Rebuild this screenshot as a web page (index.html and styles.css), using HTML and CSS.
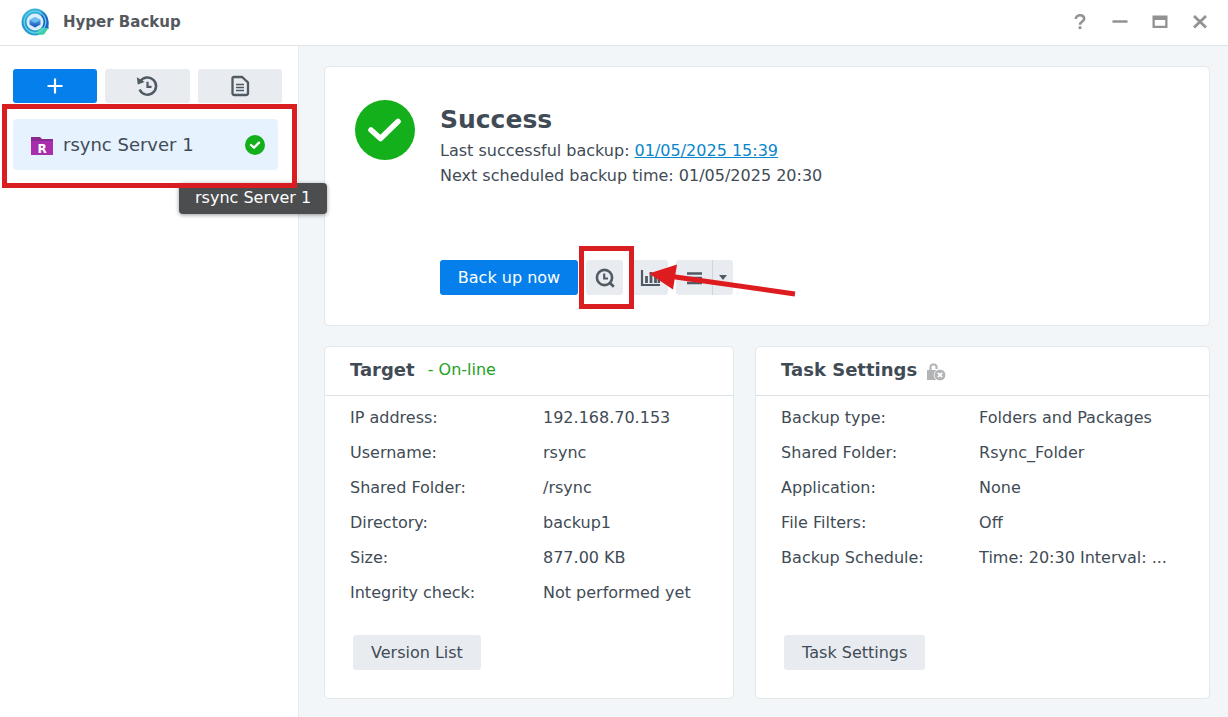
FILE: index.html
```html
<!DOCTYPE html>
<html lang="en">
<head>
<meta charset="utf-8">
<title>Hyper Backup</title>
<link rel="stylesheet" href="styles.css">
</head>
<body>
<div class="app">
  <header class="titlebar">
    <svg class="logo" viewBox="0 0 28 28" aria-hidden="true">
      <defs>
        <linearGradient id="ring" x1="0" y1="0" x2="0.3" y2="1"><stop offset="0" stop-color="#3fbfe0"/><stop offset="0.6" stop-color="#2596d0"/><stop offset="1" stop-color="#2aa0cc"/></linearGradient>
        <linearGradient id="cube" x1="0" y1="0" x2="0" y2="1"><stop offset="0" stop-color="#5bb8f5"/><stop offset="1" stop-color="#1551bd"/></linearGradient>
      </defs>
      <circle cx="14" cy="14" r="13.500" fill="url(#ring)"/>
      <path d="M20 3.500a13.500 13.500 0 0 1 7.500 10.500v7H22z" fill="#1d5fc4"/>
      <path d="M17 20h10.500l-4.500 6.500-6 .5z" fill="#3ccfa6"/>
      <circle cx="14" cy="14" r="10.800" fill="none" stroke="#62d3e4" stroke-width="1.200"/>
      <circle cx="14" cy="14" r="8.500" fill="#dcedfb"/>
      <path d="M14 9l5.500 3v4.500L14 19.500l-5.500-3V12z" fill="url(#cube)"/>
      <path d="M14 9l5.500 3L14 15l-5.500-3z" fill="#6dbdf3"/>
    </svg>
    <h1 class="app-name">Hyper Backup</h1>
    <div class="window-controls">
      <button class="win-btn" type="button" aria-label="Help"><svg viewBox="0 0 16 16"><path d="M3.800 5C3.800 0 12.200 0 12.200 4.800c0 2.800-4.200 2.700-4.200 6" fill="none" stroke="currentColor" stroke-width="2.600"/><rect x="6.600" y="12.300" width="2.800" height="2.800" fill="currentColor"/></svg></button>
      <button class="win-btn" type="button" aria-label="Minimize"><svg viewBox="0 0 16 16"><path d="M1.500 7.500h13" stroke="currentColor" stroke-width="2.400" stroke-linecap="round"/></svg></button>
      <button class="win-btn" type="button" aria-label="Maximize"><svg viewBox="0 0 16 16"><path fill-rule="evenodd" d="M.5 1.500h15V14H.5zM2.800 6v5.800h10.400V6z" fill="currentColor"/></svg></button>
      <button class="win-btn" type="button" aria-label="Close"><svg viewBox="0 0 16 16"><path d="M2 2l12 11.500M14 2L2 13.500" stroke="currentColor" stroke-width="2.800"/></svg></button>
    </div>
  </header>
  <div class="body">
    <aside class="sidebar">
      <div class="toolbar">
        <button class="btn btn-primary" type="button" aria-label="Add task"><svg class="icon" viewBox="0 0 22 22"><path d="M11 3.500v15M3.500 11h15" stroke="currentColor" stroke-width="2.200"/></svg></button>
        <button class="btn" type="button" aria-label="Restore"><svg class="icon" viewBox="0 0 22 22"><path d="M4.200 6.500A8.600 8.600 0 1 1 3.600 14.500" fill="none" stroke="currentColor" stroke-width="2.500"/><path d="M.8 2.200l1 7.200 6.800-2.300z" fill="currentColor"/><path d="M11.500 6.800v5h4" fill="none" stroke="currentColor" stroke-width="2.200"/></svg></button>
        <button class="btn" type="button" aria-label="Log"><svg class="icon" viewBox="0 0 22 22"><path d="M5 2h8l6 5.500V18a2 2 0 0 1-2 2H5.500a2 2 0 0 1-2-2V3.500A1.500 1.500 0 0 1 5 2z" fill="none" stroke="currentColor" stroke-width="2.300"/><path d="M7 9.500h8M7 12.500h8M7 15.500h8" stroke="currentColor" stroke-width="1.500"/></svg></button>
      </div>
      <nav class="tasks">
        <a class="task" href="#task">
          <svg class="folder" viewBox="0 0 22 18" aria-hidden="true"><path d="M0 0h9l2 2h11v16H0z" fill="#8a2a91"/><path d="M0 4h22v14H0z" fill="#a82eae"/><text class="folder-letter" x="11" y="16" text-anchor="middle">R</text></svg>
          <span class="task-name">rsync Server 1</span>
          <svg class="task-ok" viewBox="0 0 60 60" aria-hidden="true"><circle cx="30" cy="30" r="30" fill="#13b01b"/><path d="M18 30l9 8 15-15" fill="none" stroke="#fff" stroke-width="7" stroke-linecap="round" stroke-linejoin="round"/></svg>
        </a>
        <span class="tooltip" role="tooltip">rsync Server 1</span>
        <span class="mark mark-task"></span>
      </nav>
    </aside>
    <main class="content">
      <section class="card status">
        <svg class="status-icon" viewBox="0 0 60 60" aria-hidden="true"><circle cx="30" cy="30" r="30" fill="#13b01b"/><path d="M16 30l9.500 8.500L43 21.500" fill="none" stroke="#fff" stroke-width="5.500" stroke-linecap="round" stroke-linejoin="round"/></svg>
        <div class="status-main">
          <h2 class="status-title">Success</h2>
          <p class="status-line">Last successful backup: <a class="link" href="#log">01/05/2025 15:39</a></p>
          <p class="status-line">Next scheduled backup time: 01/05/2025 20:30</p>
          <div class="actions">
            <button class="btn btn-primary btn-backup" type="button">Back up now</button>
            <span class="marked">
              <button class="btn btn-icon" type="button" aria-label="Backup explorer"><svg class="icon-sm" viewBox="0 0 20 20"><circle cx="9.500" cy="9.500" r="7.600" fill="none" stroke="currentColor" stroke-width="2.600"/><path d="M14.500 14.500l4.300 4.300" stroke="currentColor" stroke-width="2.800"/><path d="M9.200 5.500v5H13" fill="none" stroke="currentColor" stroke-width="2.200"/></svg></button>
              <span class="mark mark-action"></span>
            </span>
            <button class="btn btn-icon btn-stats" type="button" aria-label="Statistics"><svg class="icon-sm" viewBox="0 0 20 20"><path d="M2 2v15h18" fill="none" stroke="currentColor" stroke-width="2.200"/><path d="M6.500 8v7M11 4v11M15.500 5v10M19 9v6" stroke="currentColor" stroke-width="2.800"/></svg></button>
            <button class="btn btn-menu" type="button" aria-label="More actions"><svg class="icon-sm" viewBox="0 0 20 20"><path d="M3 5.500h15M3 10h15M3 15h15" stroke="currentColor" stroke-width="2.400"/></svg><span class="split"><svg class="caret" viewBox="0 0 8 5"><path d="M0 0h8L4 5z" fill="currentColor"/></svg></span></button>
            <svg class="arrow" viewBox="0 0 150 40" aria-hidden="true"><path d="M26 16.500L149 34" stroke="#de1c20" stroke-width="5"/><path d="M3 13.500L31 4.500l-4 25z" fill="#de1c20"/></svg>
          </div>
        </div>
      </section>
      <div class="panels">
        <section class="card panel panel-target">
          <header class="panel-head"><h3 class="panel-title">Target</h3><span class="online">- On-line</span></header>
          <dl class="rows">
            <dt>IP address:</dt><dd>192.168.70.153</dd>
            <dt>Username:</dt><dd>rsync</dd>
            <dt>Shared Folder:</dt><dd>/rsync</dd>
            <dt>Directory:</dt><dd>backup1</dd>
            <dt>Size:</dt><dd>877.00 KB</dd>
            <dt>Integrity check:</dt><dd>Not performed yet</dd>
          </dl>
          <footer class="panel-foot"><button class="btn btn-text" type="button">Version List</button></footer>
        </section>
        <section class="card panel panel-settings">
          <header class="panel-head"><h3 class="panel-title">Task Settings</h3>
            <svg class="lock" viewBox="0 0 20 18" aria-hidden="true"><path d="M4.500 8V4.500a2.500 2.500 0 0 1 2.500-3h1a2.500 2.500 0 0 1 2.500 3V6" fill="none" stroke="#b1b3b4" stroke-width="2.200"/><path d="M1 7h12v10H1z" fill="#b1b3b4"/><circle cx="14" cy="12" r="5.800" fill="#b1b3b4" stroke="#fff" stroke-width="0.800"/><path d="M11.800 9.800l4.400 4.400M16.200 9.800l-4.400 4.400" stroke="#fff" stroke-width="1.800"/></svg>
          </header>
          <dl class="rows">
            <dt>Backup type:</dt><dd>Folders and Packages</dd>
            <dt>Shared Folder:</dt><dd>Rsync_Folder</dd>
            <dt>Application:</dt><dd>None</dd>
            <dt>File Filters:</dt><dd>Off</dd>
            <dt>Backup Schedule:</dt><dd>Time: 20:30 Interval: ...</dd>
          </dl>
          <footer class="panel-foot"><button class="btn btn-text" type="button">Task Settings</button></footer>
        </section>
      </div>
    </main>
  </div>
</div>
</body>
</html>
```
FILE: styles.css
```css
* { box-sizing: border-box; }

body {
  margin: 0;
  font: 16px/24px "DejaVu Sans", Verdana, sans-serif;
  color: #414b55;
  background: #fff;
}

h1, h2, h3, p, dl, dd { margin: 0; }
button { font: inherit; color: inherit; border: 0; padding: 0; cursor: pointer; }
svg { display: block; flex: none; }

.app { display: flex; flex-direction: column; min-height: 100vh; }

.titlebar {
  display: flex;
  align-items: center;
  height: 46px;
  padding: 0 18px 2px 21px;
  border-bottom: 1px solid #e1e4e6;
}
.logo { width: 28px; height: 28px; }
.app-name { margin-left: 14px; font-size: 15px; line-height: 24px; color: #54595e; }
.window-controls { display: flex; gap: 20px; margin-left: auto; }
.win-btn {
  display: flex;
  align-items: center;
  justify-content: center;
  width: 20px;
  height: 20px;
  background: none;
  color: #929292;
}
.win-btn svg { width: 16px; height: 16px; }

.body { display: flex; flex: 1; }

.sidebar {
  flex: none;
  width: 299px;
  padding: 23px 16px 0 13px;
  border-right: 1px solid #e6ebee;
}
.toolbar { display: grid; grid-template-columns: repeat(3, 1fr); gap: 8px; }
.btn {
  display: flex;
  align-items: center;
  justify-content: center;
  height: 35px;
  border-radius: 3px;
  background: #e8ecf1;
  color: #505a63;
}
.toolbar .btn { height: 34px; }
.btn-primary { background: #057feb; color: #fff; }
.icon { width: 22px; height: 22px; }

.tasks { position: relative; margin-top: 16px; }
.task {
  display: flex;
  align-items: center;
  height: 51px;
  margin-right: 4px;
  padding: 0 13px 0 18px;
  border-radius: 4px;
  background: #e6f2fe;
  color: #414b55;
  font-size: 18px;
  text-decoration: none;
}
.folder { width: 22px; height: 18px; margin-top: 2px; }
.folder-letter { font-size: 12px; font-weight: bold; fill: #fff; }
.task-name { flex: 1; margin-left: 10px; }
.task-ok { width: 20px; height: 20px; }
.tooltip {
  position: absolute;
  left: 166px;
  top: 64px;
  padding: 3px 16px 4px;
  border-radius: 4px;
  background: #4b4d4f;
  color: #fff;
  white-space: nowrap;
  box-shadow: 0 1px 4px rgba(0, 0, 0, 0.4);
  z-index: 1;
}
.mark { position: absolute; border: 5px solid #d91e22; z-index: 2; pointer-events: none; }
.mark-task { left: -11px; right: -15px; top: -15px; height: 84px; }

.content {
  display: flex;
  flex: 1;
  flex-direction: column;
  gap: 20px;
  min-width: 0;
  padding: 20px 18px 18px 25px;
  background: #f3f6f8;
}
.card { border: 1px solid #e3e8eb; border-radius: 5px; background: #fff; }

.status { display: flex; gap: 25px; height: 260px; padding: 33px 30px 30px; }
.status-icon { width: 60px; height: 60px; }
.status-main { display: flex; flex: 1; flex-direction: column; }
.status-title { margin: 5px 0 3px; font-size: 25px; line-height: 30px; }
.status-line { line-height: 25px; }
.link { color: #0a86cc; text-decoration: underline; }
.actions { position: relative; display: flex; align-items: center; margin-top: auto; }
.btn-backup { width: 138px; }
.marked { position: relative; margin-left: 8px; }
.mark-action { left: -7px; top: -14px; width: 55px; height: 63px; }
.btn-icon { width: 37px; }
.btn-stats { margin-left: 8px; }
.icon-sm { width: 20px; height: 20px; }
.btn-menu { margin-left: 8px; padding-left: 8px; }
.split {
  display: flex;
  align-items: center;
  height: 100%;
  margin-left: 8px;
  padding: 0 6px;
  border-left: 1px solid #d0d5da;
}
.caret { width: 8px; height: 5px; }
.arrow { position: absolute; left: 206px; top: 0; width: 150px; height: 40px; z-index: 3; }

.panels { display: flex; flex: 1; gap: 21px; }
.panel { display: flex; flex-direction: column; min-width: 0; }
.panel-target { flex: 410; }
.panel-settings { flex: 455; }
.panel-head {
  display: flex;
  align-items: center;
  height: 49px;
  padding: 0 25px 2px;
  border-bottom: 1px solid #dde1e4;
}
.panel-title { font-size: 18px; line-height: 24px; }
.online { margin-left: 13px; color: #25a01f; }
.lock { width: 20px; height: 18px; margin: 4px 0 0 9px; }
.rows {
  display: grid;
  grid-template-columns: 193px 1fr;
  grid-auto-rows: 35px;
  padding: 4px 0 0 25px;
  line-height: 35px;
}
.panel-settings .rows { grid-template-columns: 198px 1fr; }
.rows dd { overflow: hidden; white-space: nowrap; }
.panel-foot { display: flex; margin-top: auto; padding: 0 28px 28px; }
.btn-text { padding: 0 18px; color: #414b55; }
```
